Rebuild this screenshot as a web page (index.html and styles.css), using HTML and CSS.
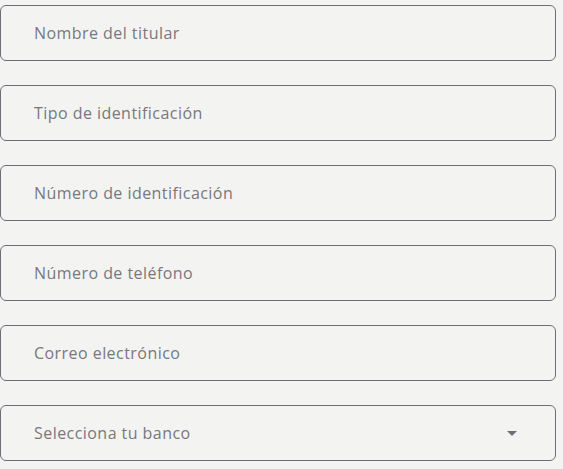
FILE: index.html
```html
<!DOCTYPE html>
<html lang="es">
<head>
<meta charset="utf-8">
<link rel="stylesheet" href="styles.css">
</head>
<body>
<form class="form">
  <div class="field"><span class="placeholder">Nombre del titular</span></div>
  <div class="field"><span class="placeholder">Tipo de identificación</span></div>
  <div class="field"><span class="placeholder">Número de identificación</span></div>
  <div class="field"><span class="placeholder">Número de teléfono</span></div>
  <div class="field"><span class="placeholder">Correo electrónico</span></div>
  <div class="field select"><span class="placeholder">Selecciona tu banco</span>
    <svg class="caret" width="10" height="5" viewBox="0 0 10 5"><path d="M0 0h10L5 5z" fill="#6f6e78"/></svg>
  </div>
</form>
</body>
</html>
```
FILE: styles.css
```css
html, body {
  margin: 0;
  padding: 0;
  background: #f3f3f2;
}
.form {
  width: 556px;
  padding-top: 5px;
  display: flex;
  flex-direction: column;
  gap: 24px;
}
.field {
  box-sizing: border-box;
  height: 56px;
  border: 1px solid #6f6e78;
  border-radius: 6px;
  display: flex;
  align-items: center;
  padding: 0 38px 0 33px;
  font-family: "Open Sans", sans-serif;
  font-size: 16px;
  letter-spacing: 0.45px;
  color: #78777e;
}
.select {
  justify-content: space-between;
}
.caret {
  display: block;
}
```
